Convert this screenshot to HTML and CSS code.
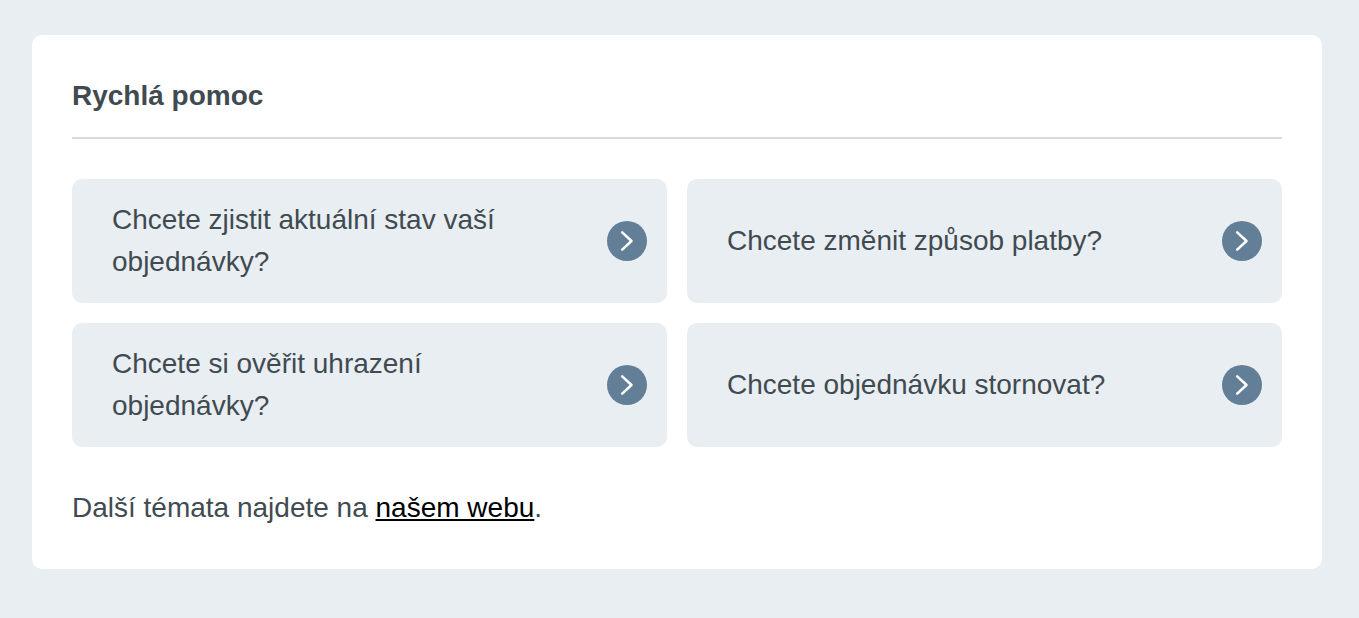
FILE: index.html
```html
<!DOCTYPE html>
<html lang="cs">
<head>
    <meta charset="UTF-8">
    <meta name="viewport" content="width=device-width, initial-scale=1.0">
    <title>Rychlá pomoc</title>
    <link rel="stylesheet" href="styles.css">
</head>
<body>
    <section class="help">
        <h2 class="help-title">Rychlá pomoc</h2>

        <!-- Témata -->
        <div class="topics">
            <a class="topic" href="#stav">
                <span class="topic-text">Chcete zjistit aktuální stav vaší objednávky?</span>
                <svg class="topic-icon" viewBox="0 0 40 40" aria-hidden="true">
                    <circle cx="20" cy="20" r="20"/>
                    <path d="M15.200 11.300L24.500 20l-9.300 8.700"/>
                </svg>
            </a>
            <a class="topic" href="#platba">
                <span class="topic-text">Chcete změnit způsob platby?</span>
                <svg class="topic-icon" viewBox="0 0 40 40" aria-hidden="true">
                    <circle cx="20" cy="20" r="20"/>
                    <path d="M15.200 11.300L24.500 20l-9.300 8.700"/>
                </svg>
            </a>
            <a class="topic" href="#uhrazeni">
                <span class="topic-text">Chcete si ověřit uhrazení objednávky?</span>
                <svg class="topic-icon" viewBox="0 0 40 40" aria-hidden="true">
                    <circle cx="20" cy="20" r="20"/>
                    <path d="M15.200 11.300L24.500 20l-9.300 8.700"/>
                </svg>
            </a>
            <a class="topic" href="#storno">
                <span class="topic-text">Chcete objednávku stornovat?</span>
                <svg class="topic-icon" viewBox="0 0 40 40" aria-hidden="true">
                    <circle cx="20" cy="20" r="20"/>
                    <path d="M15.200 11.300L24.500 20l-9.300 8.700"/>
                </svg>
            </a>
        </div>

        <p class="help-more">Další témata najdete na <a class="help-link" href="#web">našem webu</a>.</p>
    </section>
</body>
</html>
```

FILE: styles.css
```css
body {
    margin: 0;
    padding: 35px 37px 49px 32px;
    background-color: #e9eef2;
    color: #3f4b51;
    font-family: "Liberation Sans", Arial, sans-serif;
    font-size: 28px;
    line-height: 42px;
}

.help {
    padding: 40px;
    border-radius: 10px;
    background: #fff;
}

.help-title {
    margin: 0 0 40px;
    padding-bottom: 20px;
    border-bottom: 2px solid #dadada;
    font-size: 28px;
    font-weight: bold;
}

/* Mřížka témat */
.topics {
    display: grid;
    grid-template-columns: repeat(2, 1fr);
    gap: 20px;
}

.topic {
    display: flex;
    align-items: center;
    justify-content: space-between;
    gap: 80px;
    min-height: 84px;
    padding: 20px 20px 20px 40px;
    border-radius: 10px;
    background: #e9eef2;
    color: inherit;
    text-decoration: none;
}

/* Kulatá šipka */
.topic-icon {
    flex: none;
    width: 40px;
    height: 40px;
}

.topic-icon circle {
    fill: #637f98;
}

.topic-icon path {
    fill: none;
    stroke: #fff;
    stroke-width: 2.5;
    stroke-linecap: round;
    stroke-linejoin: round;
}

.help-more {
    margin: 40px 0 0;
}

.help-link {
    color: #000;
}
```
